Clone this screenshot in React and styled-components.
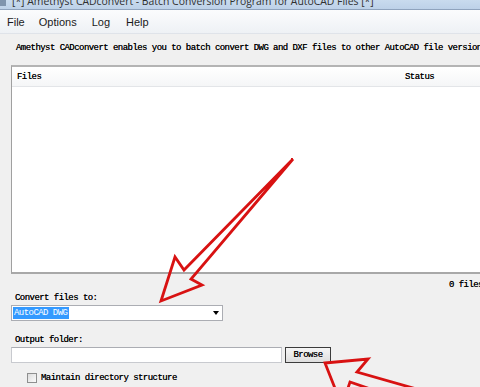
import React from 'react';
import styled, { createGlobalStyle } from 'styled-components';

const GlobalStyle = createGlobalStyle`
  html, body {
    margin: 0;
    padding: 0;
    width: 480px;
    height: 387px;
    overflow: hidden;
    background: #f0f0f0;
  }
`;

const Window = styled.div`
  position: relative;
  width: 480px;
  height: 387px;
  overflow: hidden;
  display: flex;
  flex-direction: column;
  background: #f0f0f0;
`;

const TitleBar = styled.div`
  height: 10px;
  display: flex;
  align-items: flex-end;
  overflow: hidden;
  background: linear-gradient(#c9dbee, #bdd1e8);
  border-bottom: 1px solid #8fa3bd;
  box-sizing: border-box;
`;

const TitleIcon = styled.div`
  width: 6px;
  height: 7px;
  margin-bottom: 3px;
  background: #7f94ad;
`;

const TitleText = styled.div`
  font-family: "Open Sans", "Liberation Sans", sans-serif;
  font-size: 10.4px;
  line-height: 15px;
  margin-left: 6px;
  color: #303030;
  white-space: nowrap;
`;

const MenuBar = styled.div`
  height: 24px;
  display: flex;
  align-items: center;
  background: linear-gradient(#fbfcfd, #eef1f5);
  border-bottom: 1px solid #dfe3e9;
  box-sizing: border-box;
  padding-left: 7px;
`;

const MenuItem = styled.span`
  font-family: "Liberation Sans", Arial, sans-serif;
  font-size: 11px;
  color: #1a1a1a;
  margin-right: ${(p) => p.$gap}px;
`;

const Content = styled.div`
  display: flex;
  flex-direction: column;
  padding-left: 11px;
`;

const Mono = styled.div`
  font-family: "Liberation Mono", "DejaVu Sans Mono", monospace;
  font-size: 9px;
  letter-spacing: -0.55px;
  color: #000;
  white-space: nowrap;
  text-shadow: 0 0 0.15px #333;
`;

const Description = styled(Mono)`
  margin-top: 7px;
  line-height: 14px;
  padding-left: 5px;
`;

const ListPanel = styled.div`
  margin-top: 10px;
  width: 500px;
  height: 209px;
  box-sizing: border-box;
  background: #fff;
  border: 1px solid #a0a0a0;
  border-top: 2px solid #b4b4b4;
  border-bottom: 2px solid #a8a8a8;
  display: flex;
  flex-direction: column;
`;

const ListHeader = styled.div`
  height: 19px;
  display: flex;
  align-items: center;
  padding-left: 5px;
  background: linear-gradient(#ffffff, #f5f6f7);
  border-bottom: 1px solid #e3e5e8;
`;

const HeaderCell = styled(Mono)`
  width: ${(p) => p.$width || 'auto'};
`;

const FileCount = styled(Mono)`
  margin-top: 4px;
  line-height: 14px;
  padding-left: 438px;
`;

const FieldLabel = styled(Mono)`
  line-height: 12px;
  padding-left: 4px;
  margin-top: ${(p) => p.$top}px;
`;

const Combo = styled.div`
  margin-top: 1px;
  width: 212px;
  height: 16px;
  box-sizing: border-box;
  border: 1px solid #abadb3;
  background: #fff;
  display: flex;
  align-items: center;
  justify-content: space-between;
  padding: 0 3px 0 1px;
`;

const Selected = styled(Mono)`
  background: #3399ff;
  color: #fff;
  text-shadow: none;
  line-height: 12px;
  padding: 0 2px 0 1px;
`;

const ComboArrow = styled.div`
  width: 0;
  height: 0;
  border-left: 3px solid transparent;
  border-right: 3px solid transparent;
  border-top: 4px solid #000;
`;

const InputRow = styled.div`
  margin-top: 1px;
  display: flex;
  gap: 3px;
  height: 16px;
`;

const TextInput = styled.div`
  width: 271px;
  box-sizing: border-box;
  border: 1px solid #c8cacf;
  border-top-color: #abadb3;
  background: #fff;
`;

const Button = styled.div`
  width: 46px;
  box-sizing: border-box;
  border: 1px solid #3c3c3c;
  background: linear-gradient(#f6f6f6, #dedede);
  display: flex;
  align-items: center;
  justify-content: center;
`;

const CheckRow = styled.div`
  margin-top: 9px;
  display: flex;
  align-items: center;
  gap: 4px;
  padding-left: 16px;
  height: 12px;
`;

const CheckBox = styled.div`
  width: 10px;
  height: 10px;
  box-sizing: border-box;
  border: 1px solid #8e8f8f;
  background: linear-gradient(135deg, #dcdcdc, #fbfbfb);
`;

const Overlay = styled.svg`
  position: absolute;
  left: 0;
  top: 0;
  pointer-events: none;
`;

const App = () => {
  return (
    <Window>
      <GlobalStyle />
      <TitleBar>
        <TitleIcon />
        <TitleText>[*] Amethyst CADconvert - Batch Conversion Program for AutoCAD Files [*]</TitleText>
      </TitleBar>
      <MenuBar>
        <MenuItem $gap={14}>File</MenuItem>
        <MenuItem $gap={15}>Options</MenuItem>
        <MenuItem $gap={16}>Log</MenuItem>
        <MenuItem $gap={0}>Help</MenuItem>
      </MenuBar>
      <Content>
        <Description>
          Amethyst CADconvert enables you to batch convert DWG and DXF files to other AutoCAD file versions
        </Description>
        <ListPanel>
          <ListHeader>
            <HeaderCell $width="388px">Files</HeaderCell>
            <HeaderCell>Status</HeaderCell>
          </ListHeader>
        </ListPanel>
        <FileCount>0 files</FileCount>
        <FieldLabel $top={0}>Convert files to:</FieldLabel>
        <Combo>
          <Selected>AutoCAD DWG</Selected>
          <ComboArrow />
        </Combo>
        <FieldLabel $top={13}>Output folder:</FieldLabel>
        <InputRow>
          <TextInput />
          <Button>
            <Mono>Browse</Mono>
          </Button>
        </InputRow>
        <CheckRow>
          <CheckBox />
          <Mono>Maintain directory structure</Mono>
        </CheckRow>
      </Content>
      <Overlay width="480" height="387" viewBox="0 0 480 387">
        <polygon
          points="293,159 191,279 202,285 161,301 175,257 184,270"
          fill="none"
          stroke="#d81212"
          strokeWidth="2.8"
          strokeLinejoin="miter"
        />
        <polygon
          points="325,363 368,359 357,372 560,430 540,447 350,382 342,406"
          fill="none"
          stroke="#d81212"
          strokeWidth="2.8"
          strokeLinejoin="miter"
        />
      </Overlay>
    </Window>
  );
};

export default App;
